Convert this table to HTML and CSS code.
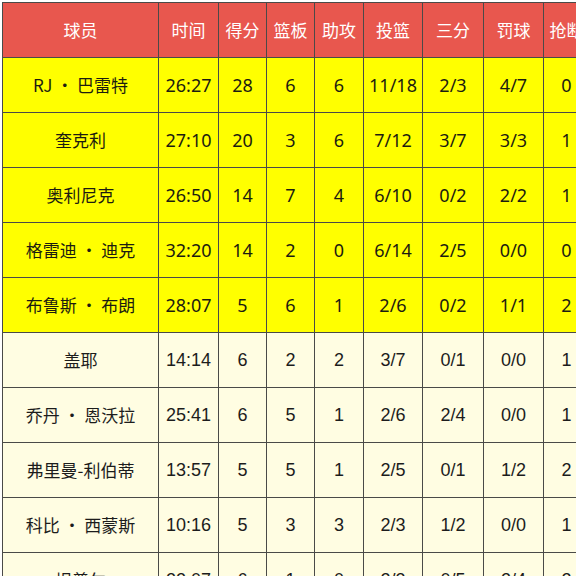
FILE: index.html
```html
<!DOCTYPE html>
<html lang="zh">
<head>
<meta charset="utf-8">
<link rel="stylesheet" href="styles.css">
</head>
<body>
<div class="frame">
<table class="stats">
<colgroup>
<col class="c-name"><col class="c-time"><col class="c-n"><col class="c-n"><col class="c-n2"><col class="c-fg"><col class="c-3p"><col class="c-ft"><col class="c-st">
</colgroup>
<thead>
<tr><th>球员</th><th>时间</th><th>得分</th><th>篮板</th><th>助攻</th><th>投篮</th><th>三分</th><th>罚球</th><th>抢断</th></tr>
</thead>
<tbody>
<tr class="starter"><td class="name">RJ · 巴雷特</td><td>26:27</td><td>28</td><td>6</td><td>6</td><td>11/18</td><td>2/3</td><td>4/7</td><td>0</td></tr>
<tr class="starter"><td class="name">奎克利</td><td>27:10</td><td>20</td><td>3</td><td>6</td><td>7/12</td><td>3/7</td><td>3/3</td><td>1</td></tr>
<tr class="starter"><td class="name">奥利尼克</td><td>26:50</td><td>14</td><td>7</td><td>4</td><td>6/10</td><td>0/2</td><td>2/2</td><td>1</td></tr>
<tr class="starter"><td class="name">格雷迪 · 迪克</td><td>32:20</td><td>14</td><td>2</td><td>0</td><td>6/14</td><td>2/5</td><td>0/0</td><td>0</td></tr>
<tr class="starter"><td class="name">布鲁斯 · 布朗</td><td>28:07</td><td>5</td><td>6</td><td>1</td><td>2/6</td><td>0/2</td><td>1/1</td><td>2</td></tr>
<tr class="bench"><td class="name">盖耶</td><td>14:14</td><td>6</td><td>2</td><td>2</td><td>3/7</td><td>0/1</td><td>0/0</td><td>1</td></tr>
<tr class="bench"><td class="name">乔丹 · 恩沃拉</td><td>25:41</td><td>6</td><td>5</td><td>1</td><td>2/6</td><td>2/4</td><td>0/0</td><td>1</td></tr>
<tr class="bench"><td class="name">弗里曼-利伯蒂</td><td>13:57</td><td>5</td><td>5</td><td>1</td><td>2/5</td><td>0/1</td><td>1/2</td><td>2</td></tr>
<tr class="bench"><td class="name">科比 · 西蒙斯</td><td>10:16</td><td>5</td><td>3</td><td>3</td><td>2/3</td><td>1/2</td><td>0/0</td><td>1</td></tr>
<tr class="bench"><td class="name">坦普尔</td><td>22:07</td><td>6</td><td>1</td><td>0</td><td>2/3</td><td>0/5</td><td>2/4</td><td>2</td></tr>
</tbody>
</table>
</div>
</body>
</html>
```
FILE: styles.css
```css
html, body {
  margin: 0;
  padding: 0;
  background: #ffffff;
}
.frame {
  width: 576px;
  height: 576px;
  overflow: hidden;
  padding: 2px 0 0 2px;
  box-sizing: border-box;
}
.stats {
  border-collapse: collapse;
  table-layout: fixed;
  width: 587px;
  font-family: "Noto Sans", "Noto Sans CJK SC", sans-serif;
  font-size: 18px;
  color: #1a1a1a;
}
.c-name { width: 156px; }
.c-time { width: 60px; }
.c-n { width: 48px; }
.c-n2 { width: 49px; }
.c-fg { width: 59px; }
.c-3p { width: 61px; }
.c-ft { width: 60px; }
.c-st { width: 46px; }
.stats th, .stats td {
  border: 1px solid #4a4a48;
  height: 54px;
  padding: 0;
  text-align: center;
  vertical-align: middle;
  white-space: nowrap;
  overflow: hidden;
  line-height: 22px;
}
.stats th {
  background: #e8574e;
  color: #ffffff;
  font-weight: normal;
  font-size: 17px;
  font-family: "Noto Sans CJK SC", sans-serif;
}
.starter td {
  background: #ffff00;
  color: #1c1c10;
}
.bench td {
  background: #fffde2;
  color: #1c1c1c;
  font-family: "Liberation Sans", "Noto Sans CJK SC", sans-serif;
}
.stats td.name {
  font-size: 17px;
  font-family: "Noto Sans CJK SC", sans-serif;
}
```
